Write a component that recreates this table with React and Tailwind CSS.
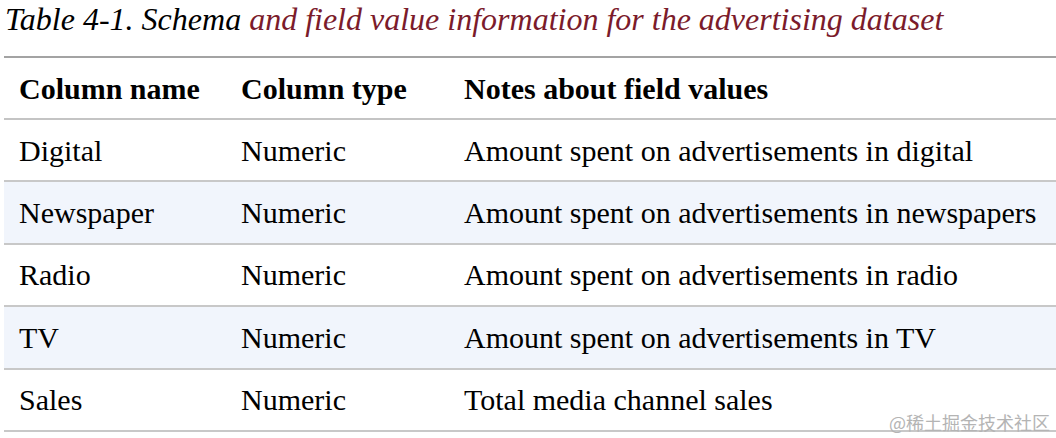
const rows = [
  ["Digital", "Numeric", "Amount spent on advertisements in digital"],
  ["Newspaper", "Numeric", "Amount spent on advertisements in newspapers"],
  ["Radio", "Numeric", "Amount spent on advertisements in radio"],
  ["TV", "Numeric", "Amount spent on advertisements in TV"],
  ["Sales", "Numeric", "Total media channel sales"],
];

const App = () => {
  return (
    <div
      className="relative w-[1056px] h-[438px] bg-white overflow-hidden text-black"
      style={{ fontFamily: '"Liberation Serif", "Times New Roman", serif' }}
    >
      <div className="pl-[5px] pt-[1px] h-[56px] text-[32px] leading-[36px] italic whitespace-nowrap">
        <span className="text-black">Table 4-1. Schema </span>
        <span className="text-[#7b1b2b]">
          and field value information for the advertising dataset
        </span>
      </div>

      <table className="ml-[4px] w-[1052px] border-collapse text-[30px] whitespace-nowrap">
        <thead>
          <tr className="border-t-2 border-b-2 border-t-[#a3a3a3] border-b-[#c4c4c4]">
            <th className="w-[222px] h-[62px] pl-[15px] text-left font-bold">
              Column name
            </th>
            <th className="w-[223px] pl-[15px] text-left font-bold">
              Column type
            </th>
            <th className="pl-[15px] text-left font-bold">
              Notes about field values
            </th>
          </tr>
        </thead>
        <tbody>
          {rows.map((row, i) => (
            <tr
              key={row[0]}
              className={`border-b-2 border-[#c8c8c8] ${
                i % 2 === 1 ? "bg-[#f1f5fc]" : "bg-white"
              }`}
            >
              {row.map((cell, j) => (
                <td key={j} className="h-[62.4px] pl-[15px] align-middle">
                  {cell}
                </td>
              ))}
            </tr>
          ))}
        </tbody>
      </table>

      {/* watermark */}
      <div
        className="absolute right-[6px] bottom-[7px] text-[18px] leading-none text-[#b4b4b4]"
        style={{ fontFamily: '"Noto Sans CJK SC", sans-serif' }}
      >
        @稀土掘金技术社区
      </div>
    </div>
  );
};

export default App;
